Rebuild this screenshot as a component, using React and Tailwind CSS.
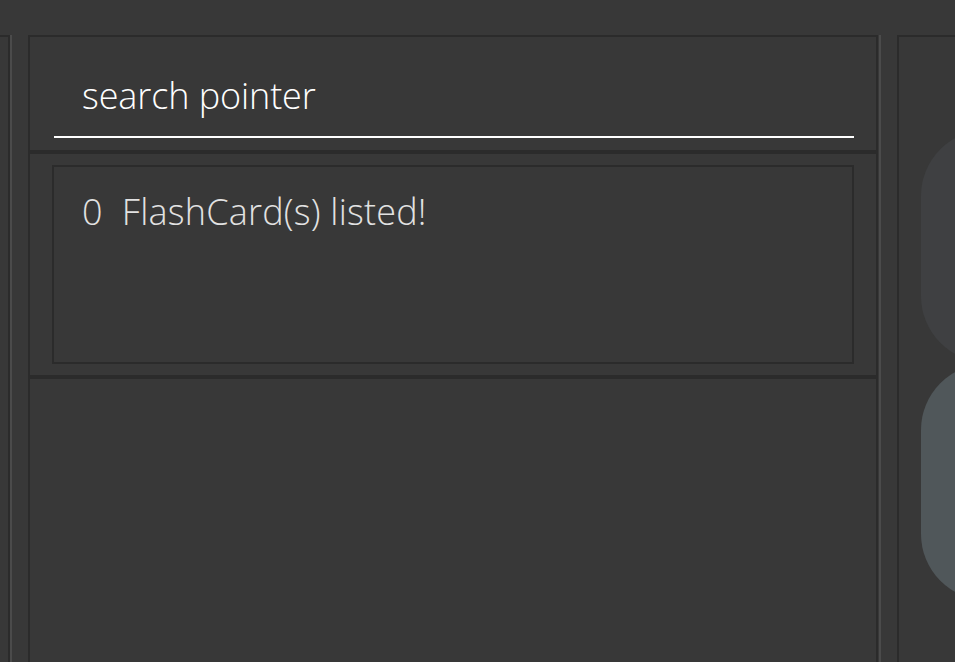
import React from "react";

export default function App() {
  const font = { fontFamily: '"Open Sans", "Segoe UI", sans-serif' };
  return (
    <div className="w-[955px] h-[662px] overflow-hidden bg-[#383838] pt-[35px] flex" style={font}>
      {/* left panel edge */}
      <div className="w-[10px] shrink-0 border-t-2 border-r-2 border-[#2b2b2b]" />
      <div className="w-[2px] shrink-0 bg-[#4b4b4b]" />
      <div className="w-[16px] shrink-0" />

      {/* center panel */}
      <div className="w-[850px] shrink-0 flex flex-col">
        <div className="h-[117px] border-2 border-[#2b2b2b] pl-[24px]">
          <div className="pt-[35px] w-[800px] h-[101px] border-b-2 border-white">
            <div className="pl-[28px] text-[36px] leading-[48px] font-light text-white tracking-[-0.1px]">
              search pointer
            </div>
          </div>
        </div>
        <div className="h-[225px] border-2 border-[#2b2b2b] px-[22px] py-[11px]">
          <div className="h-[199px] border-2 border-[#2b2b2b] pl-[28px] pt-[21px]">
            <div className="text-[36px] leading-[48px] font-light text-[#e2e2e2] whitespace-pre tracking-[0.2px]">
              {"0  FlashCard(s) listed!"}
            </div>
          </div>
        </div>
        <div className="flex-1 border-2 border-b-0 border-[#2b2b2b]" />
      </div>

      <div className="w-[1px] shrink-0" />
      <div className="w-[2px] shrink-0 bg-[#4b4b4b]" />
      <div className="w-[16px] shrink-0" />

      {/* right panel */}
      <div className="w-[200px] shrink-0 border-t-2 border-l-2 border-[#2b2b2b] pl-[22px] pt-[93px] flex flex-col gap-[2px]">
        <div className="w-[200px] h-[232px] rounded-[66px] bg-[#3f4042]" />
        <div className="w-[200px] h-[236px] rounded-[66px] bg-[#50575a]" />
      </div>
    </div>
  );
}
